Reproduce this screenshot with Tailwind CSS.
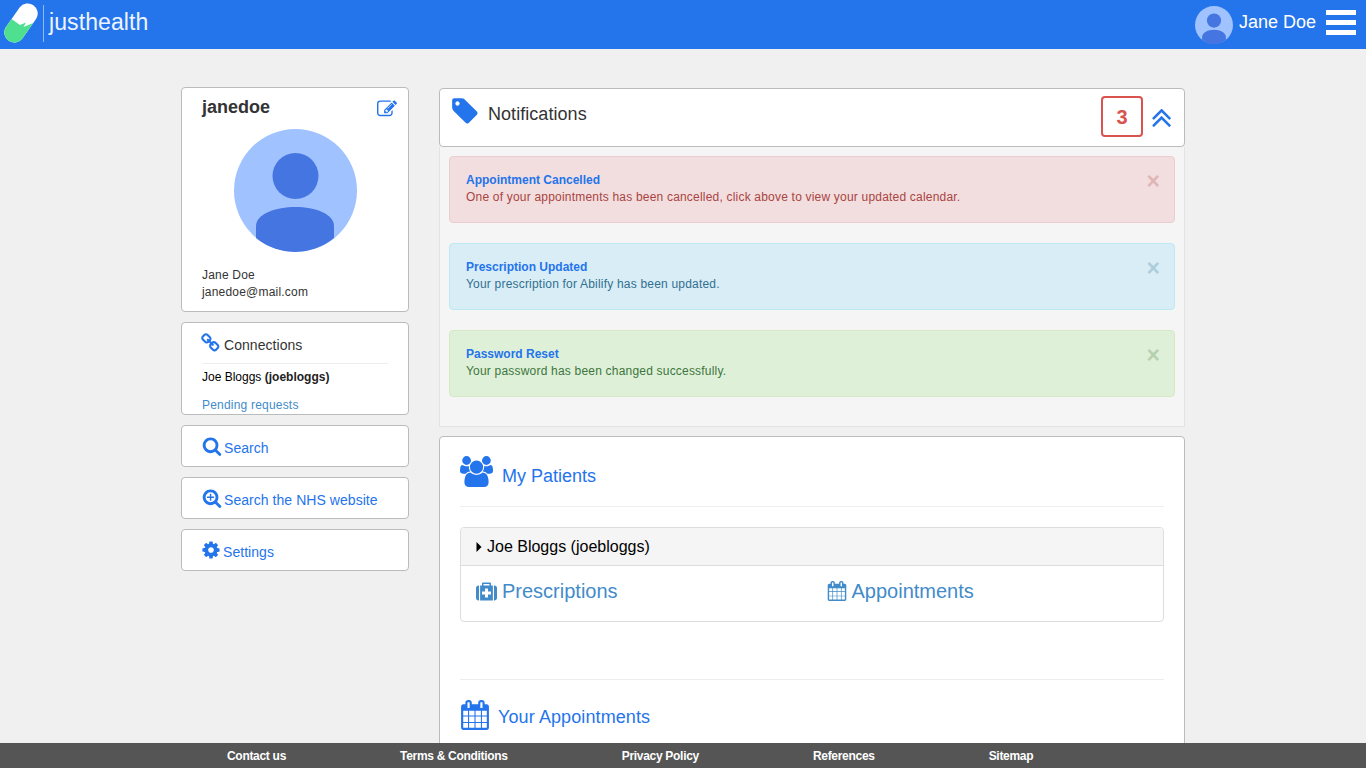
<!DOCTYPE html>
<html lang="en">
<head>
    <meta charset="UTF-8">
    <meta name="viewport" content="width=device-width, initial-scale=1.0">
    <title>justhealth - Dashboard</title>
    <script src="https://cdn.jsdelivr.net/npm/@tailwindcss/browser@4"></script>
</head>
<body class="bg-[#f0f0f0] text-[#333] font-['Liberation_Sans',Arial,sans-serif] h-screen overflow-hidden flex flex-col">
    <!-- Navbar -->
    <header class="h-[49px] shrink-0 bg-[#2474ec] flex items-center text-white">
        <svg class="ml-[4px] mb-[3px] w-[34px] h-[40px]" viewBox="0 0 34 40">
            <path d="M15.800 4.300A10 10 0 0 1 32.200 15.700L18.200 35.700A10 10 0 0 1 1.800 24.300Z" fill="#fff"/>
            <path d="M7.600 16L16 22L22 19.500L19.500 24L29.200 20L18.200 35.700A10 10 0 0 1 1.800 24.300Z" fill="#4fe08f"/>
        </svg>
        <div class="ml-[5px] mb-[3px] w-px h-[37px] bg-[#8fb8f5]"></div>
        <span class="ml-[5px] text-[23px] tracking-[0.1px] leading-none text-[#eef4ff] pb-[5px]">justhealth</span>
        <div class="ml-auto flex items-center">
            <svg class="w-[38px] h-[38px]" viewBox="0 0 123 123">
                <circle cx="61.500" cy="61.500" r="61.500" fill="#a0c2ff"/>
                <circle cx="61.500" cy="47" r="23" fill="#4475e0"/>
                <path d="M23 110V100c0-14 20-23 38.500-23S100 86 100 100v10a61.500 61.500 0 0 1-77 0z" fill="#4475e0"/>
            </svg>
            <span class="ml-[6px] text-[18px] pb-[4px]">Jane Doe</span>
            <div class="ml-[10px] mr-[10px] mb-[4px] w-[30px] flex flex-col gap-[5px]">
                <div class="h-[5px] bg-white"></div>
                <div class="h-[5px] bg-white"></div>
                <div class="h-[5px] bg-white"></div>
            </div>
        </div>
    </header>

    <div class="flex-1 min-h-0 overflow-hidden flex pl-[181px]">
        <!-- Left column -->
        <aside class="w-[228px] shrink-0 pt-[38px] flex flex-col gap-[10px]">
            <div class="h-[225px] bg-white border border-[#bbb] rounded-[4px] px-[20px]">
                <div class="flex items-center justify-between h-[37px] pt-[2px]">
                    <h2 class="text-[18px] font-bold">janedoe</h2>
                    <svg class="w-[20px] h-[20px] mt-[2px] text-[#2474ec] -mr-[9px]" viewBox="0 0 1792 1792" fill="currentColor"><path d="M888 1184l116-116-152-152-116 116v56h96v96h56zm440-720q-16-16-33 1l-350 350q-17 17-1 33t33-1l350-350q17-17 1-33zm80 594v190q0 119-84.500 203.500t-203.500 84.500h-832q-119 0-203.500-84.500t-84.500-203.500v-832q0-119 84.500-203.500t203.500-84.500h832q63 0 117 25 15 7 18 23 3 17-9 29l-49 49q-14 14-32 8-23-6-45-6h-832q-66 0-113 47t-47 113v832q0 66 47 113t113 47h832q66 0 113-47t47-113v-126q0-13 9-22l64-64q15-15 35-7t20 29zm-96-738l288 288-672 672h-288v-288zm444 132l-92 92-288-288 92-92q28-28 68-28t68 28l152 152q28 28 28 68t-28 68z"/></svg>
                </div>
                <svg class="mt-[4px] ml-[32px] w-[123px] h-[123px]" viewBox="0 0 123 123">
                    <circle cx="61.500" cy="61.500" r="61.500" fill="#a0c2ff"/>
                    <circle cx="61.500" cy="47" r="23" fill="#4475e0"/>
                    <path d="M22 109V97c0-12 20-19 39.500-19S100 85 100 97v12a61.500 61.500 0 0 1-78 0z" fill="#4475e0"/>
                </svg>
                <p class="mt-[15px] text-[12px] tracking-[0.2px] leading-[17px]">Jane Doe</p>
                <p class="text-[12px] tracking-[0.2px] leading-[17px]">janedoe@mail.com</p>
            </div>

            <div class="h-[93px] bg-white border border-[#bbb] rounded-[4px] px-[20px] overflow-hidden">
                <div class="h-[41px] w-[186px] flex items-center border-b border-[#eee]">
                    <svg class="w-[20px] h-[20px] -ml-[1px] text-[#2474ec]" viewBox="0 0 1792 1792" fill="currentColor"><path d="M1456 1216q0-40-28-68l-208-208q-28-28-68-28-42 0-72 32 3 3 19 18.500t21.500 21.500 15 19 13 25.500 3.500 27.500q0 40-28 68t-68 28q-15 0-27.500-3.500t-25.500-13-19-15-21.500-21.500-18.500-19q-33 31-33 73 0 40 28 68l206 207q27 27 68 27 40 0 68-26l147-146q28-28 28-67zm-703-705q0-40-28-68l-206-207q-28-28-68-28-39 0-68 27l-147 146q-28 28-28 67 0 40 28 68l208 208q27 27 68 27 42 0 72-31-3-3-19-18.500t-21.500-21.500-15-19-13-25.500-3.500-27.500q0-40 28-68t68-28q15 0 27.500 3.500t25.500 13 19 15 21.500 21.500 18.500 19q33-31 33-73zm895 705q0 120-85 203l-147 146q-83 83-203 83-121 0-204-85l-206-207q-83-83-83-203 0-123 88-209l-88-88q-86 88-208 88-120 0-204-84l-208-208q-84-84-84-204t85-203l147-146q83-83 203-83 121 0 204 85l206 207q83 83 83 203 0 123-88 209l88 88q86-88 208-88 120 0 204 84l208 208q84 84 84 204z"/></svg>
                    <span class="ml-[3px] text-[14px] tracking-[0.05px] mt-[5px]">Connections</span>
                </div>
                <p class="mt-[5px] text-[12px] leading-[17px] text-black">Joe Bloggs <span class="font-bold text-[#222]">(joebloggs)</span></p>
                <p class="mt-[11px] text-[12px] tracking-[0.2px] leading-[17px] text-[#428bca]">Pending requests</p>
            </div>

            <div class="h-[42px] bg-white border border-[#bbb] rounded-[4px] pl-[20px] flex items-center text-[#2474ec]">
                <svg class="w-[20px] h-[20px] mb-[1px]" viewBox="0 0 1792 1792" fill="currentColor"><path d="M1216 832q0-185-131.500-316.500t-316.500-131.500-316.500 131.500-131.500 316.500 131.500 316.500 316.500 131.500 316.500-131.500 131.500-316.500zm512 832q0 52-38 90t-90 38q-54 0-90-38l-343-342q-179 124-399 124-143 0-273.500-55.500t-225-150-150-225-55.500-273.500 55.500-273.500 150-225 225-150 273.500-55.500 273.500 55.500 225 150 150 225 55.500 273.500q0 220-124 399l343 343q37 37 37 90z"/></svg>
                <span class="ml-[2px] text-[14px] tracking-[0.05px] mt-[4px]">Search</span>
            </div>
            <div class="h-[42px] bg-white border border-[#bbb] rounded-[4px] pl-[20px] flex items-center text-[#2474ec]">
                <svg class="w-[20px] h-[20px] mb-[1px]" viewBox="0 0 1792 1792" fill="currentColor"><path d="M1088 800v64q0 13-9.500 22.500t-22.500 9.500h-224v224q0 13-9.500 22.500t-22.500 9.500h-64q-13 0-22.500-9.500t-9.500-22.500v-224h-224q-13 0-22.500-9.500t-9.500-22.500v-64q0-13 9.500-22.500t22.500-9.500h224v-224q0-13 9.500-22.500t22.500-9.500h64q13 0 22.500 9.500t9.500 22.500v224h224q13 0 22.500 9.500t9.500 22.500zm128 32q0-185-131.500-316.500t-316.500-131.500-316.500 131.500-131.500 316.500 131.500 316.500 316.500 131.500 316.500-131.500 131.500-316.500zm512 832q0 53-37.500 90.500t-90.500 37.500q-54 0-90-38l-343-342q-179 124-399 124-143 0-273.500-55.500t-225-150-150-225-55.500-273.500 55.500-273.500 150-225 225-150 273.500-55.500 273.500 55.500 225 150 150 225 55.500 273.500q0 220-124 399l343 343q37 37 37 90z"/></svg>
                <span class="ml-[2px] text-[14px] tracking-[0.05px] mt-[4px]">Search the NHS website</span>
            </div>
            <div class="h-[42px] bg-white border border-[#bbb] rounded-[4px] pl-[19px] flex items-center text-[#2474ec]">
                <svg class="w-[20px] h-[20px]" viewBox="0 0 1792 1792" fill="currentColor"><path d="M1152 896q0-106-75-181t-181-75-181 75-75 181 75 181 181 75 181-75 75-181zm512-109v222q0 12-8 23t-20 13l-185 28q-19 54-39 91 35 50 107 138 10 12 10 25t-9 23q-27 37-99 108t-94 71q-12 0-26-9l-138-108q-44 23-91 38-16 136-29 186-7 28-36 28h-222q-14 0-24.500-8.500t-11.500-21.500l-28-184q-49-16-90-37l-141 107q-10 9-25 9-14 0-25-11-126-114-165-168-7-10-7-23 0-12 8-23 15-21 51-66.500t54-70.500q-27-50-41-99l-183-27q-13-2-21-12.500t-8-23.500v-222q0-12 8-23t19-13l186-28q14-46 39-92-40-57-107-138-10-12-10-24 0-10 9-23 26-36 98.500-107.500t94.500-71.500q13 0 26 10l138 107q44-23 91-38 16-136 29-186 7-28 36-28h222q14 0 24.500 8.500t11.500 21.500l28 184q49 16 90 37l142-107q9-9 24-9 13 0 25 10 129 119 165 170 7 8 7 22 0 12-8 23-15 21-51 66.500t-54 70.500q26 50 41 98l183 28q13 2 21 12.500t8 23.500z"/></svg>
                <span class="ml-[2px] text-[14px] tracking-[0.05px] mt-[4px]">Settings</span>
            </div>
        </aside>

        <!-- Right column -->
        <main class="w-[746px] shrink-0 ml-[30px] pt-[39px]">
            <div class="h-[59px] bg-white border border-[#bbb] rounded-[4px] flex items-center pl-[10px] pr-[13px]">
                <svg class="w-[30px] h-[30px] text-[#2474ec] mb-[14px]" viewBox="0 0 1792 1792" fill="currentColor"><path d="M576 448q0-53-37.500-90.500t-90.500-37.500-90.500 37.500-37.500 90.500 37.500 90.500 90.500 37.500 90.500-37.500 37.500-90.500zm1067 576q0 53-37 90l-491 492q-39 37-91 37-53 0-90-38l-715-715q-38-37-64.500-101t-26.500-117v-416q0-52 38-90t90-38h416q53 0 117 26.500t102 64.500l715 714q37 39 37 91z"/></svg>
                <span class="ml-[8px] text-[18px] tracking-[0.05px] mb-[6px]">Notifications</span>
                <div class="ml-auto mb-[2px] w-[42px] h-[41px] border-2 border-[#d9534f] rounded-[4px] flex items-center justify-center text-[20px] font-bold text-[#d9534f]">3</div>
                <svg class="ml-[9px] w-[19px] h-[19px] text-[#2474ec]" viewBox="387 380 1010 1020" fill="currentColor"><path d="M1395 1312q0 13-10 23l-50 50q-10 10-23 10t-23-10l-393-393-393 393q-10 10-23 10t-23-10l-50-50q-10-10-10-23t10-23l466-466q10-10 23-10t23 10l466 466q10 10 10 23zm0-384q0 13-10 23l-50 50q-10 10-23 10t-23-10l-393-393-393 393q-10 10-23 10t-23-10l-50-50q-10-10-10-23t10-23l466-466q10-10 23-10t23 10l466 466q10 10 10 23z"/></svg>
            </div>

            <div class="h-[280px] bg-[#f5f5f5] border border-t-0 border-[#e3e3e3] pt-[9px] px-[9px] flex flex-col gap-[20px]">
                <div class="h-[67px] bg-[#f2dede] border border-[#ebccd1] rounded-[4px] pl-[16px] pt-[15px] relative text-[12px] leading-[17px] text-[#a94442]">
                    <p class="font-bold text-[#2474ec]">Appointment Cancelled</p>
                    <p class="tracking-[0.2px]">One of your appointments has been cancelled, click above to view your updated calendar.</p>
                    <span class="absolute right-[14px] top-[14px] text-[23px] leading-[20px] font-bold opacity-25">×</span>
                </div>
                <div class="h-[67px] bg-[#d9edf7] border border-[#bce8f1] rounded-[4px] pl-[16px] pt-[15px] relative text-[12px] leading-[17px] text-[#31708f]">
                    <p class="font-bold text-[#2474ec]">Prescription Updated</p>
                    <p class="tracking-[0.2px]">Your prescription for Abilify has been updated.</p>
                    <span class="absolute right-[14px] top-[14px] text-[23px] leading-[20px] font-bold opacity-25">×</span>
                </div>
                <div class="h-[67px] bg-[#dff0d8] border border-[#d6e9c6] rounded-[4px] pl-[16px] pt-[15px] relative text-[12px] leading-[17px] text-[#3c763d]">
                    <p class="font-bold text-[#2474ec]">Password Reset</p>
                    <p class="tracking-[0.2px]">Your password has been changed successfully.</p>
                    <span class="absolute right-[14px] top-[14px] text-[23px] leading-[20px] font-bold opacity-25">×</span>
                </div>
            </div>

            <div class="mt-[9px] bg-white border border-[#bbb] rounded-[4px] px-[20px] h-[500px]">
                <div class="h-[70px] flex items-center border-b border-[#eee]">
                    <svg class="w-[33px] h-[33px] text-[#2474ec]" viewBox="0 0 1920 1792" fill="currentColor"><path d="M593 896q-162 5-265 128h-134q-82 0-138-40.500t-56-118.500q0-353 124-353 6 0 43.500 21t97.500 42.500 119 21.500q67 0 133-23-5 37-5 66 0 139 81 256zm1071 637q0 120-73 189.500t-194 69.500h-874q-121 0-194-69.500t-73-189.500q0-53 3.500-103.500t14-109 26.500-108.500 43-97.500 62-81 85.500-53.500 111.500-20q10 0 43 21.500t73 48 107 48 135 21.500 135-21.500 107-48 73-48 43-21.500q61 0 111.500 20t85.500 53.500 62 81 43 97.500 26.500 108.500 14 109 3.500 103.500zm-1024-1277q0 106-75 181t-181 75-181-75-75-181 75-181 181-75 181 75 75 181zm704 384q0 159-112.500 271.500t-271.500 112.500-271.500-112.500-112.500-271.500 112.500-271.500 271.500-112.500 271.500 112.500 112.500 271.500zm576 225q0 78-56 118.500t-138 40.500h-134q-103-123-265-128 81-117 81-256 0-29-5-66 66 23 133 23 59 0 119-21.500t97.500-42.500 43.500-21q124 0 124 353zm-128-609q0 106-75 181t-181 75-181-75-75-181 75-181 181-75 181 75 75 181z"/></svg>
                    <span class="ml-[9px] pt-[10px] text-[18px] text-[#2474ec]">My Patients</span>
                </div>
                <div class="mt-[20px] h-[95px] border border-[#ddd] rounded-[4px] overflow-hidden">
                    <div class="h-[38px] bg-[#f5f5f5] border-b border-[#ddd] pl-[15px] flex items-center text-[16px] text-black">
                        <svg class="w-[6px] h-[10px]" viewBox="0 0 6 10" fill="currentColor"><path d="M0.500 0L5.500 5L0.500 10z"/></svg>
                        <span class="ml-[5px]">Joe Bloggs (joebloggs)</span>
                    </div>
                    <div class="h-[55px] grid grid-cols-2 text-[20px] text-[#428bca] pl-[15px]">
                        <div class="flex items-center pb-[5px]">
                            <svg class="w-[21px] h-[21px]" viewBox="0 0 1792 1792" fill="currentColor"><path d="M1280 1120v-192q0-14-9-23t-23-9h-224v-224q0-14-9-23t-23-9h-192q-14 0-23 9t-9 23v224h-224q-14 0-23 9t-9 23v192q0 14 9 23t23 9h224v224q0 14 9 23t23 9h192q14 0 23-9t9-23v-224h224q14 0 23-9t9-23zm-640-736h512v-128h-512v128zm-384 0v1280h-32q-92 0-158-66t-66-158v-832q0-92 66-158t158-66h32zm1184 0v1280h-1088v-1280h160v-160q0-40 28-68t68-28h576q40 0 68 28t28 68v160h160zm352 224v832q0 92-66 158t-158 66h-32v-1280h32q92 0 158 66t66 158z"/></svg>
                            <span class="ml-[5px]">Prescriptions</span>
                        </div>
                        <div class="flex items-center pb-[5px] ml-[7px]">
                            <svg class="w-[20px] h-[20px]" viewBox="0 0 1792 1792" fill="currentColor"><path d="M192 1664h288v-288h-288v288zm352 0h320v-288h-320v288zm-352-352h288v-320h-288v320zm352 0h320v-320h-320v320zm-352-384h288v-288h-288v288zm736 736h320v-288h-320v288zm-384-736h320v-288h-320v288zm768 736h288v-288h-288v288zm-384-352h320v-320h-320v320zm-352-864v-288q0-13-9.500-22.500t-22.500-9.500h-64q-13 0-22.500 9.500t-9.500 22.500v288q0 13 9.500 22.500t22.500 9.500h64q13 0 22.500-9.500t9.500-22.500zm736 864h288v-320h-288v320zm-384-384h320v-288h-320v288zm384 0h288v-288h-288v288zm32-480v-288q0-13-9.500-22.500t-22.500-9.500h-64q-13 0-22.500 9.500t-9.500 22.500v288q0 13 9.500 22.500t22.500 9.500h64q13 0 22.500-9.500t9.500-22.500zm384-64v1280q0 52-38 90t-90 38h-1408q-52 0-90-38t-38-90v-1280q0-52 38-90t90-38h128v-96q0-66 47-113t113-47h64q66 0 113 47t47 113v96h384v-96q0-66 47-113t113-47h64q66 0 113 47t47 113v96h128q52 0 90 38t38 90z"/></svg>
                            <span class="ml-[5px]">Appointments</span>
                        </div>
                    </div>
                </div>
                <div class="mt-[57px] border-t border-[#eee] pt-[18px] flex items-center">
                    <svg class="w-[30px] h-[30px] text-[#2474ec]" viewBox="0 0 1792 1792" fill="currentColor"><path d="M192 1664h288v-288h-288v288zm352 0h320v-288h-320v288zm-352-352h288v-320h-288v320zm352 0h320v-320h-320v320zm-352-384h288v-288h-288v288zm736 736h320v-288h-320v288zm-384-736h320v-288h-320v288zm768 736h288v-288h-288v288zm-384-352h320v-320h-320v320zm-352-864v-288q0-13-9.500-22.500t-22.500-9.500h-64q-13 0-22.500 9.500t-9.500 22.500v288q0 13 9.500 22.500t22.500 9.500h64q13 0 22.500-9.500t9.500-22.500zm736 864h288v-320h-288v320zm-384-384h320v-288h-320v288zm384 0h288v-288h-288v288zm32-480v-288q0-13-9.500-22.500t-22.500-9.500h-64q-13 0-22.500 9.500t-9.500 22.500v288q0 13 9.500 22.500t22.500 9.500h64q13 0 22.500-9.500t9.500-22.500zm384-64v1280q0 52-38 90t-90 38h-1408q-52 0-90-38t-38-90v-1280q0-52 38-90t90-38h128v-96q0-66 47-113t113-47h64q66 0 113 47t47 113v96h384v-96q0-66 47-113t113-47h64q66 0 113 47t47 113v96h128q52 0 90 38t38 90z"/></svg>
                    <span class="ml-[8px] pt-[6px] text-[18px] tracking-[0.1px] text-[#2474ec]">Your Appointments</span>
                </div>
            </div>
        </main>
    </div>

    <!-- Footer -->
    <footer class="h-[25px] shrink-0 bg-[#555] flex items-center pl-[227px] gap-[114px] text-[12px] tracking-[-0.3px] font-bold text-white">
        <span>Contact us</span>
        <span>Terms &amp; Conditions</span>
        <span>Privacy Policy</span>
        <span>References</span>
        <span>Sitemap</span>
    </footer>
</body>
</html>
